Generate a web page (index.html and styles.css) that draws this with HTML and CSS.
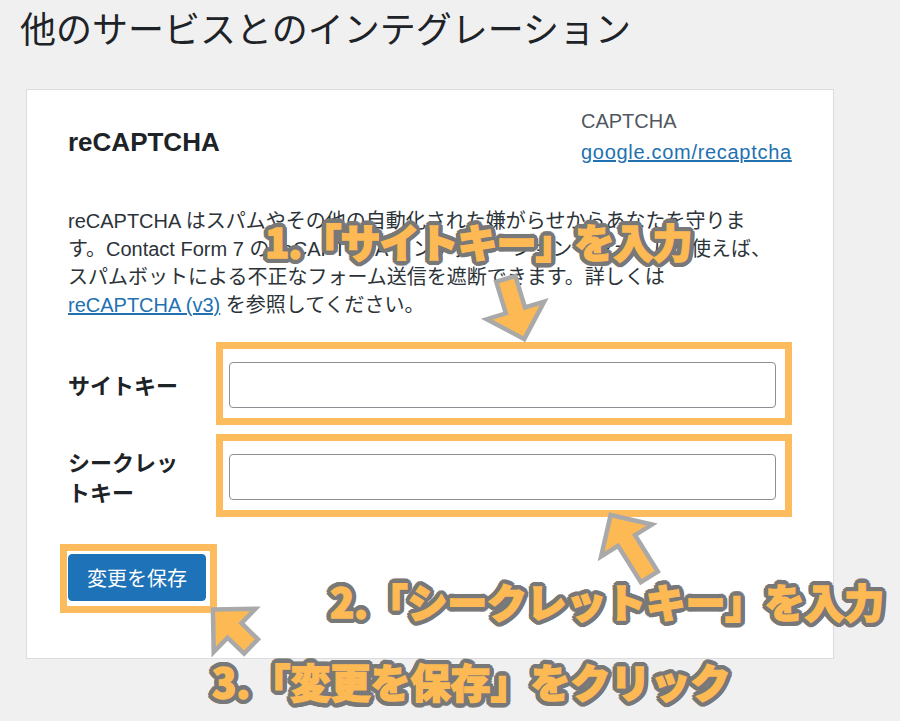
FILE: index.html
```html
<!DOCTYPE html>
<html lang="ja">
<head>
    <meta charset="UTF-8">
    <meta name="viewport" content="width=device-width, initial-scale=1.0">
    <title>他のサービスとのインテグレーション</title>
    <link rel="stylesheet" href="styles.css">
</head>
<body>
    <div class="page">
        <h1 class="title">他のサービスとのインテグレーション</h1>
        <div class="card">
            <div class="card-head">
                <h2 class="card-title">reCAPTCHA</h2>
                <ul class="infobox">
                    <li>CAPTCHA</li>
                    <li><a class="info-link" href="#">google.com/recaptcha</a></li>
                </ul>
            </div>
            <p class="desc">reCAPTCHA はスパムやその他の自動化された嫌がらせからあなたを守りま<br>す。Contact Form 7 の reCAPTCHA インテグレーションモジュールを使えば、<br>スパムボットによる不正なフォーム送信を遮断できます。詳しくは<br><a href="#">reCAPTCHA (v3)</a> を参照してください。</p>
            <form class="keys">
                <div class="key-row">
                    <label class="key-label" for="sitekey">サイトキー</label>
                    <span class="mark"><input class="key-input" id="sitekey" type="text"></span>
                </div>
                <div class="key-row">
                    <label class="key-label" for="secret">シークレットキー</label>
                    <span class="mark"><input class="key-input" id="secret" type="text"></span>
                </div>
                <div class="submit">
                    <span class="mark mark-btn"><button class="save" type="button">変更を保存</button></span>
                </div>
            </form>
        </div>

        <!-- annotations drawn over the screen -->
        <div class="note note-1">1.「サイトキー」を入力</div>
        <div class="note note-2">2.「シークレットキー」を入力</div>
        <div class="note note-3">3.「変更を保存」をクリック</div>

        <svg class="arrow arrow-1" width="90" height="90" viewBox="-45 -45 90 90">
            <polygon transform="rotate(163)" points="0,-31.5 30,-1.5 10,-1.5 10,31.5 -10,31.5 -10,-1.5 -30,-1.5"/>
        </svg>
        <svg class="arrow arrow-2" width="90" height="90" viewBox="-45 -45 90 90">
            <polygon transform="rotate(-32)" points="0,-36.5 30,-6.5 10,-6.5 10,36.5 -10,36.5 -10,-6.5 -30,-6.5"/>
        </svg>
        <svg class="arrow arrow-3" width="90" height="90" viewBox="-45 -45 90 90">
            <polygon transform="rotate(-46)" points="0,-26.5 30,3.5 10,3.5 10,26.5 -10,26.5 -10,3.5 -30,3.5"/>
        </svg>
    </div>
</body>
</html>
```

FILE: styles.css
```css
body {
    margin: 0;
    background: #f0f0f1;
    font-family: "Liberation Sans", "Noto Sans CJK JP", sans-serif;
    color: #2c3338;
}
.page {
    position: relative;
    width: 900px;
    height: 721px;
    padding: 0 20px;
    box-sizing: border-box;
    overflow: hidden;
}
.title {
    margin: 0;
    padding-top: 4px;
    font-family: "Noto Sans CJK JP", sans-serif;
    font-size: 36px;
    font-weight: 400;
    line-height: 47px;
    color: #1d2327;
}
.card {
    box-sizing: border-box;
    width: 808px;
    margin: 38px 0 0 6px;
    padding: 16px 40px 45px 41px;
    background: #fff;
    border: 1px solid #dcdcde;
}
.card-head {
    display: flex;
    justify-content: space-between;
    align-items: flex-start;
}
.card-title {
    margin: 19px 0 0;
    font-size: 26px;
    font-weight: 700;
    line-height: 34px;
    color: #1d2327;
}
.infobox {
    width: 212px;
    margin: 0;
    padding: 0;
    list-style: none;
    font-size: 20px;
    line-height: 31px;
    color: #50575e;
}
a {
    color: #2271b1;
    text-decoration: underline;
}
.info-link {
    letter-spacing: 0.7px;
}
.desc {
    margin: 39px 0 0;
    font-size: 20px;
    line-height: 28px;
    color: #2c3338;
}
.keys {
    margin-top: 23px;
}
.key-row {
    display: grid;
    grid-template-columns: 148px 576px;
    align-items: center;
    margin-bottom: 9px;
}
.key-label {
    max-width: 120px;
    font-family: "Noto Sans CJK JP", sans-serif;
    font-size: 22px;
    font-weight: 700;
    line-height: 30px;
    color: #1d2327;
}
.mark {
    display: block;
    box-sizing: border-box;
    border: 7px solid #fcbc5e;
    padding: 13px 9px 10px 6px;
}
.key-input {
    display: block;
    box-sizing: border-box;
    width: 100%;
    height: 46px;
    margin: 0;
    border: 1px solid #8c8f94;
    border-radius: 4px;
    background: #fff;
}
.submit {
    margin: 27px 0 0 -8px;
}
.mark-btn {
    display: inline-block;
    padding: 3px 4px 5px 1px;
}
.save {
    display: block;
    height: 47px;
    padding: 0 18px;
    border: 1px solid #1e72b8;
    border-radius: 4px;
    background: #1e72b8;
    color: #fff;
    font-family: "Noto Sans CJK JP", sans-serif;
    font-size: 20px;
}
.note {
    position: absolute;
    white-space: nowrap;
    font-family: "Noto Sans CJK JP", sans-serif;
    font-size: 40px;
    font-weight: 900;
    line-height: 40px;
    color: #fdb953;
    -webkit-text-stroke: 1.5px #fdb953;
    text-shadow:
        5px 0 0 #787878, -5px 0 0 #787878, 0 5px 0 #787878, 0 -5px 0 #787878,
        4px 3px 0 #787878, -4px 3px 0 #787878, 4px -3px 0 #787878, -4px -3px 0 #787878,
        3px 4px 0 #787878, -3px 4px 0 #787878, 3px -4px 0 #787878, -3px -4px 0 #787878,
        5px 1.5px 0 #787878, -5px 1.5px 0 #787878, 5px -1.5px 0 #787878, -5px -1.5px 0 #787878,
        1.5px 5px 0 #787878, -1.5px 5px 0 #787878, 1.5px -5px 0 #787878, -1.5px -5px 0 #787878;
}
.note-1 {
    left: 265px;
    top: 221px;
    letter-spacing: -1px;
}
.note-2 {
    left: 330px;
    top: 581px;
    letter-spacing: -0.3px;
}
.note-3 {
    left: 212px;
    top: 661px;
}
.arrow {
    position: absolute;
    overflow: visible;
}
.arrow polygon {
    fill: #fdb953;
    stroke: #a9a9a9;
    stroke-width: 4.5;
    stroke-linejoin: miter;
}
.arrow-1 {
    left: 470px;
    top: 264px;
}
.arrow-2 {
    left: 585px;
    top: 501px;
}
.arrow-3 {
    left: 187px;
    top: 583px;
}
```
